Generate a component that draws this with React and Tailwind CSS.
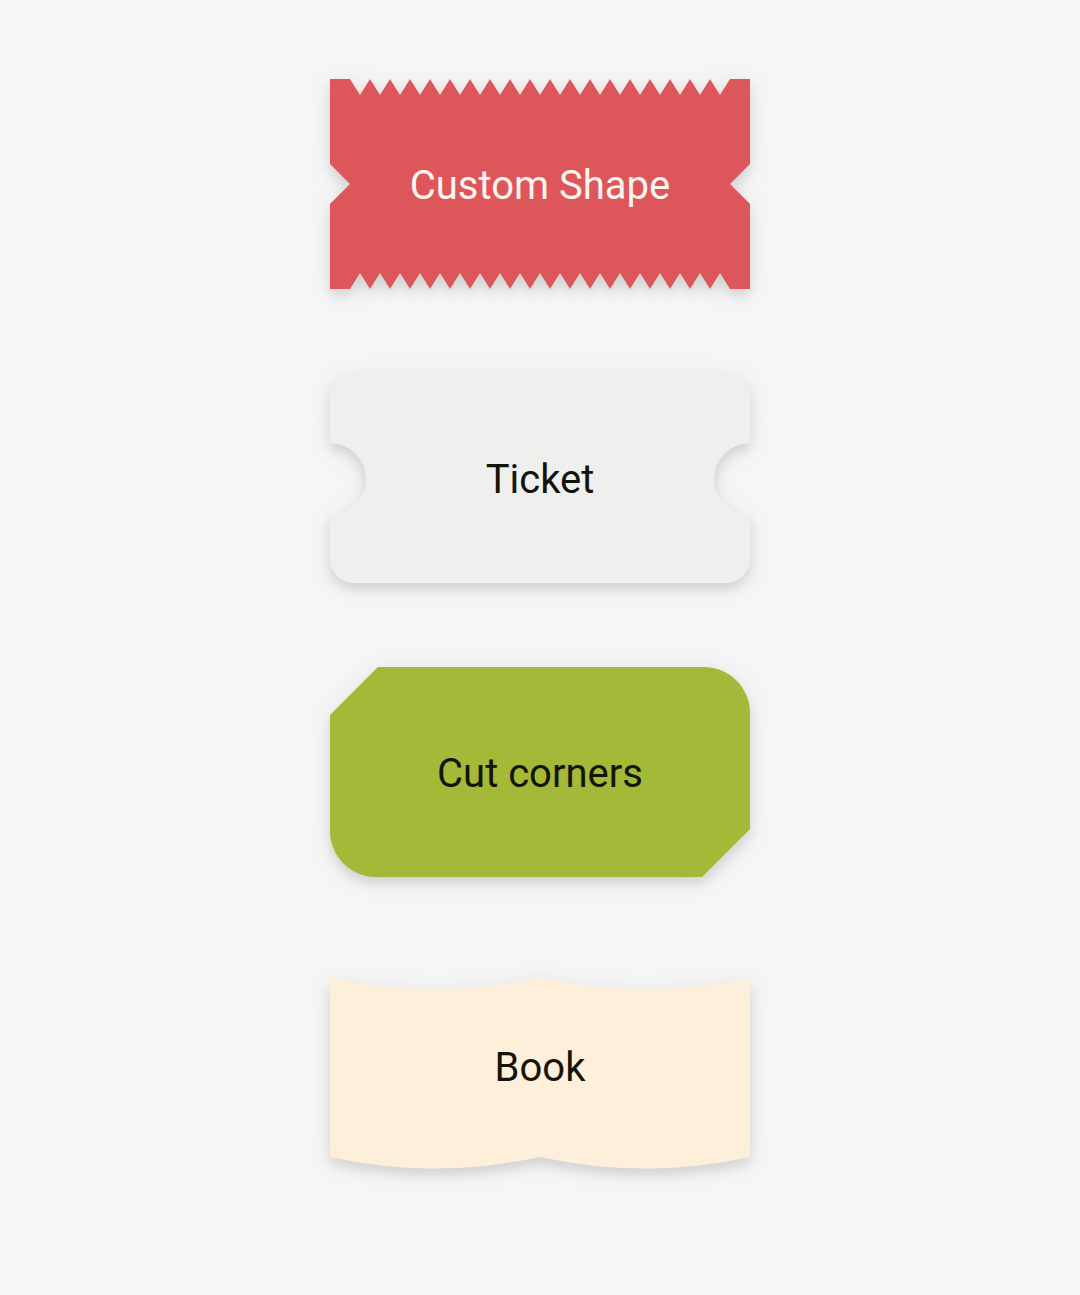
import React from "react";

const W = 420;
const H = 210;

function zigzagPath() {
  const pts = [[0, 0], [20, 0]];
  for (let i = 0; i < 19; i++) {
    pts.push([20 + 20 * i + 10, 16]);
    pts.push([20 + 20 * (i + 1), 0]);
  }
  pts.push([420, 0], [420, 85], [400, 105], [420, 125], [420, 210], [400, 210]);
  for (let i = 0; i < 19; i++) {
    pts.push([400 - 20 * i - 10, 194]);
    pts.push([400 - 20 * (i + 1), 210]);
  }
  pts.push([0, 210], [0, 125], [20, 105], [0, 85]);
  return "M" + pts.map((p) => p.join(",")).join(" L") + " Z";
}

const ticketPath =
  "M24,0 H396 A24,24 0 0 1 420,24 V70 A36,36 0 0 0 420,142 V186 A24,24 0 0 1 396,210 H24 A24,24 0 0 1 0,186 V142 A36,36 0 0 0 0,70 V24 A24,24 0 0 1 24,0 Z";

const cutPath =
  "M48,0 H374 A46,46 0 0 1 420,46 V162 L372,210 H46 A46,46 0 0 1 0,164 V48 Z";

const bookPath =
  "M0,17 Q105,40 210,17 Q315,40 420,17 V196 Q315,219 210,196 Q105,219 0,196 Z";

function Shape({ d, fill, label, textClass }) {
  return (
    <div className="relative w-[420px] h-[210px] flex items-center justify-center">
      <svg
        className="absolute inset-0 overflow-visible [filter:drop-shadow(0_7px_6px_rgba(0,0,0,0.10))_drop-shadow(0_3px_12px_rgba(0,0,0,0.07))]"
        width={W}
        height={H}
        viewBox={`0 0 ${W} ${H}`}
      >
        <path d={d} fill={fill} />
      </svg>
      <span
        className={`relative pt-[4px] text-[40px] leading-none font-['Roboto',_'Liberation_Sans',_sans-serif] ${textClass}`}
      >
        {label}
      </span>
    </div>
  );
}

export default function App() {
  return (
    <div className="min-h-[1295px] w-full bg-[#f6f6f6] flex flex-col items-center pt-[79px] gap-[84px]">
      <Shape d={zigzagPath()} fill="#dd5659" label="Custom Shape" textClass="text-[#fbf4ef]" />
      <Shape d={ticketPath} fill="#efefee" label="Ticket" textClass="text-[#14140a]" />
      <Shape d={cutPath} fill="#a3b937" label="Cut corners" textClass="text-[#14140a]" />
      <Shape d={bookPath} fill="#fdefd9" label="Book" textClass="text-[#14140a]" />
    </div>
  );
}
